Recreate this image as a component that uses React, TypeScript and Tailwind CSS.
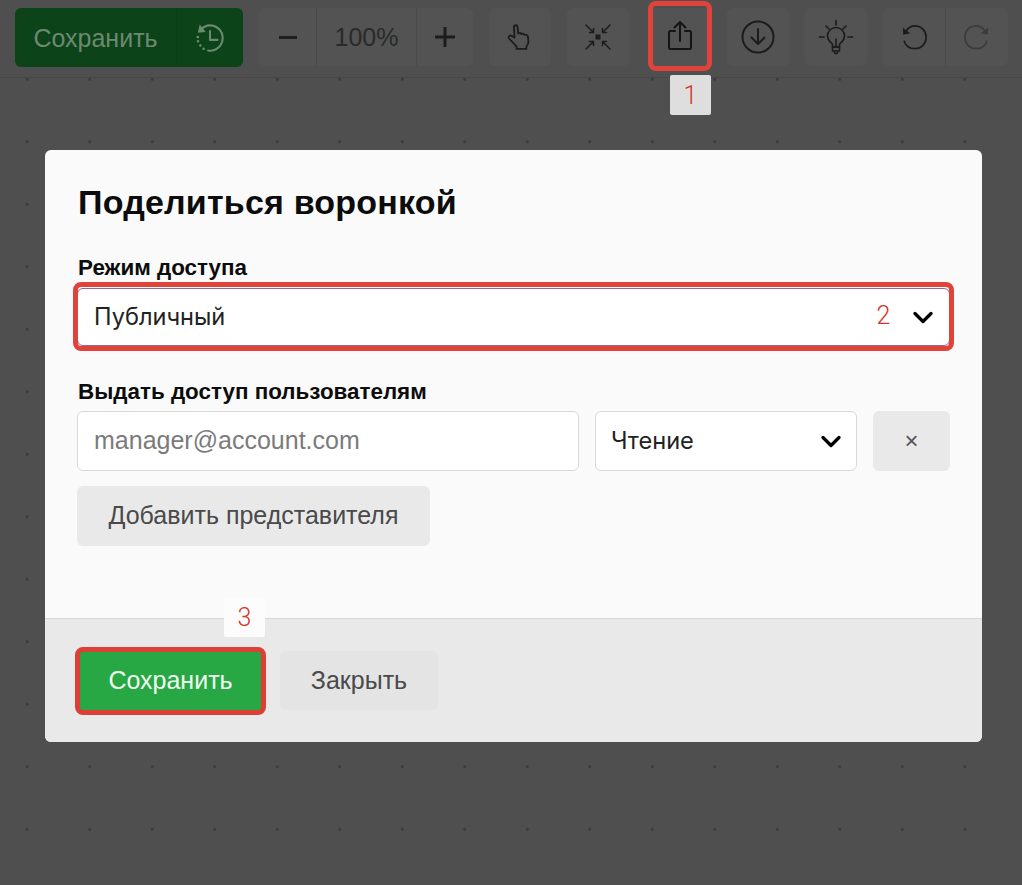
import { ReactNode } from 'react';

const Chevron = ({ className }: { className?: string }) => (
    <svg viewBox="0 0 20 13" className={className} fill="none" stroke="currentColor" strokeWidth="3.200" strokeLinecap="round" strokeLinejoin="round">
        <path d="M2 2.500 10 10.500l8-8" />
    </svg>
);

const HistoryIcon = () => (
    <svg viewBox="0 0 32 32" className="w-[30px] h-[30px]" fill="none" stroke="currentColor" strokeWidth="2.200" strokeLinecap="round" strokeLinejoin="round">
        <path d="M6.500 7C9 4 12.500 2.500 16 2.500c7.500 0 13.500 6 13.500 13.500S23.500 29.500 16 29.500c-.7 0-1.400-.1-2-.2" />
        <path d="M3 15v.01M3.200 19.500v.01M5.700 24v.01M9.200 27.500v.01" strokeWidth="2.800" />
        <path d="M5 1.500 3 10.500l8.500-.8z" fill="currentColor" stroke="none" />
        <path d="M16 8.500V18h8" />
    </svg>
);

const HandIcon = () => (
    <svg viewBox="0 0 26 26" className="w-[26px] h-[26px]" fill="none" stroke="currentColor" strokeWidth="1.800" strokeLinecap="round" strokeLinejoin="round">
        <path d="M7.500 13.500 7 3c0-2.200 3.400-2.400 3.600-.1l.6 6.600c1-1 2.800-.6 3.200.6 1-.8 2.700-.3 3 .8 1.600-.6 3.400.3 3.600 2l.4 4.500c.1 2-.8 3.600-2 5v2.500H9.500v-2.500L2 14.500c-1.300-1.700.9-3.800 2.700-2.600z" />
    </svg>
);

const TargetIcon = () => (
    <svg viewBox="0 0 30 30" className="w-[30px] h-[30px]" fill="none" stroke="currentColor" strokeWidth="1.500" strokeLinecap="round" strokeLinejoin="round">
        <rect x="12.500" y="12.500" width="5" height="5" fill="currentColor" stroke="none" />
        <path d="M3 3l7.500 7.500M10.500 6.500v4h-4M27 3l-7.500 7.500M19.500 6.500v4h4M3 27l7.500-7.500M10.500 23.500v-4h-4M27 27l-7.500-7.500M19.500 23.500v-4h4" />
    </svg>
);

const ShareIcon = () => (
    <svg viewBox="0 0 26 32" className="w-[26px] h-[32px] -mt-[3px]" fill="none" stroke="currentColor" strokeWidth="2" strokeLinecap="round" strokeLinejoin="round">
        <path d="M8 11H3.500A1.500 1.500 0 0 0 2 12.500v15A1.500 1.500 0 0 0 3.500 29h19a1.500 1.500 0 0 0 1.500-1.500v-15a1.500 1.500 0 0 0-1.500-1.500H18" />
        <path d="M13 21V2M7.500 7.500 13 2l5.500 5.500" />
    </svg>
);

const DownloadIcon = () => (
    <svg viewBox="0 0 34 34" className="w-[34px] h-[34px]" fill="none" stroke="currentColor" strokeWidth="2" strokeLinecap="round" strokeLinejoin="round">
        <circle cx="17" cy="17" r="15.500" />
        <path d="M17 9v15M10.500 17.500 17 24l6.500-6.500" />
    </svg>
);

const BulbIcon = () => (
    <svg viewBox="0 0 36 36" className="w-[36px] h-[36px]" fill="none" stroke="currentColor" strokeWidth="1.600" strokeLinecap="round" strokeLinejoin="round">
        <path d="M18 1.500v4.500M8 7l3 3M28 7l-3 3M1.500 18h4.500M30 18h4.500" />
        <path d="M14.500 28v-2.500c0-1.500-5-3-5-8.500a8.500 8.500 0 0 1 17 0c0 5.500-5 7-5 8.500V28z" />
        <path d="M14.500 28h7v4h-7zM16 32l1 2.500h2l1-2.500M18 27v-7" />
    </svg>
);

const UndoIcon = ({ flip }: { flip?: boolean }) => (
    <svg viewBox="0 0 30 30" className={flip ? 'w-[28px] h-[28px] -scale-x-100' : 'w-[28px] h-[28px]'} fill="none" stroke="currentColor" strokeWidth="1.800" strokeLinecap="round" strokeLinejoin="round">
        <path d="M6.500 8.500C8.800 4.900 12 3 16 3c6.900 0 12 5.400 12 12.300S22.900 27.500 16 27.500c-5.400 0-9.800-3-11.500-8" />
        <path d="M3 5l.5 7.500 7.500-1.500z" fill="currentColor" stroke="none" />
    </svg>
);

const ToolButton = ({ children, className }: { children: ReactNode; className?: string }) => (
    <div className={`h-[58px] flex items-center justify-center bg-[#535353] rounded-md ${className ?? ''}`}>{children}</div>
);

const Marker = ({ n, className }: { n: number; className: string }) => (
    <div className={`absolute w-[41px] h-[40px] pt-[2px] flex items-center justify-center rounded-[2px] text-[25px] font-light font-['Roboto'] text-[#d8342c] ${className}`}>{n}</div>
);

export default function App() {
    return (
        <div className="relative w-full h-[885px] overflow-hidden bg-[#4f4f4f] font-['Liberation_Sans',sans-serif] bg-[radial-gradient(circle,#3a3a3a_1.2px,transparent_1.6px)] bg-[size:62.500px_62.500px] bg-[position:-4px_48px]">
            {/* Toolbar */}
            <div className="h-[78px] flex gap-4 pl-[15px] pt-2 bg-[#4f4f4f] border-b border-[#474747] text-[#1c1c1c]">
                <div className="w-[228px] h-[59px] flex rounded-md bg-[#0c4319] text-[#6b8a70]">
                    <div className="flex-1 pt-[2px] flex items-center justify-center text-[25px] border-r border-[#0b3f18]">Сохранить</div>
                    <div className="w-[66px] flex items-center justify-center">
                        <HistoryIcon />
                    </div>
                </div>
                <div className="w-[214px] h-[58px] flex rounded-md bg-[#535353] text-[25px]">
                    <div className="w-[58px] flex items-center justify-center border-r border-[#4b4b4b]">
                        <div className="w-[18px] h-[3px] bg-[#1f1f1f]" />
                    </div>
                    <div className="w-[100px] pt-[2px] flex items-center justify-center text-[#2a2a2a] border-r border-[#4b4b4b]">100%</div>
                    <div className="flex-1 flex items-center justify-center">
                        <svg viewBox="0 0 20 20" className="w-[20px] h-[20px]" stroke="currentColor" strokeWidth="3">
                            <path d="M10 0v20M0 10h20" />
                        </svg>
                    </div>
                </div>
                <ToolButton className="w-[62px]"><HandIcon /></ToolButton>
                <ToolButton className="w-[62px]"><TargetIcon /></ToolButton>
                <div className="relative w-[63px] h-[58px] ml-[3px]">
                    <ToolButton className="w-[63px] text-[#141414]"><ShareIcon /></ToolButton>
                    <div className="absolute left-0 -right-px -top-[7px] -bottom-[5px] border-[5px] border-[#e0433a] rounded-lg" />
                </div>
                <ToolButton className="w-[62px]"><DownloadIcon /></ToolButton>
                <ToolButton className="w-[62px]"><BulbIcon /></ToolButton>
                <div className="w-[125px] h-[58px] flex rounded-md bg-[#535353]">
                    <div className="w-[63px] flex items-center justify-center border-r border-[#4b4b4b]">
                        <UndoIcon />
                    </div>
                    <div className="flex-1 flex items-center justify-center text-[#3c3c3c]">
                        <UndoIcon flip />
                    </div>
                </div>
            </div>
            <Marker n={1} className="left-[670px] top-[75px] bg-[#dedede]" />

            {/* Modal */}
            <div className="absolute left-[45px] top-[150px] w-[937px] h-[592px] flex flex-col rounded-md overflow-hidden bg-[#fafafa]">
                <div className="h-[469px] px-[32px] pt-[32px] border-b border-[#d6d6d6]">
                    <h2 className="ml-px text-[34px] leading-[40px] font-bold text-[#0c0c0c] tracking-[0.2px]">Поделиться воронкой</h2>
                    <div className="ml-px mt-[33px] text-[22.400px] leading-[26px] font-bold text-[#0c0c0c]">Режим доступа</div>
                    <div className="relative mt-[7px] h-[58px] flex items-center justify-between pl-[16px] pr-[16px] bg-white rounded-md font-['Inter'] text-[23.600px] text-[#222222] border border-[#8a6a9a]">
                        <span>Публичный</span>
                        <Chevron className="w-[20px] h-[13px] text-black" />
                        <div className="absolute -left-[5px] -right-[5px] -top-[7px] -bottom-[6px] border-[5px] border-[#e0433a] rounded-lg" />
                    </div>
                    <div className="ml-px mt-[33px] text-[22.400px] leading-[26px] font-bold text-[#0c0c0c]">Выдать доступ пользователям</div>
                    <div className="mt-[6px] flex gap-4">
                        <div className="w-[502px] h-[60px] flex items-center pl-[16px] bg-white border border-[#d9d9d9] rounded-md text-[25px] text-[#7b7b7b]">manager@account.com</div>
                        <div className="w-[262px] h-[60px] flex items-center justify-between pl-[15px] pr-[15px] bg-white border border-[#d9d9d9] rounded-md font-['Inter'] text-[23.600px] text-[#222222]">
                            <span>Чтение</span>
                            <Chevron className="w-[20px] h-[13px] text-black" />
                        </div>
                        <div className="w-[77px] h-[60px] flex items-center justify-center bg-[#e9e9e9] rounded-md text-[24px] text-[#555555]">×</div>
                    </div>
                    <div className="mt-[15px] w-[353px] h-[60px] flex items-center justify-center bg-[#e9e9e9] rounded-md text-[25px] text-[#4a4a4a]">Добавить представителя</div>
                </div>
                <div className="flex-1 flex items-center gap-[14px] pl-[30px] bg-[#e9e9e9]">
                    <div className="w-[191px] h-[68px] flex items-center justify-center bg-[#28a745] border-[5px] border-[#dc3f35] rounded-lg text-[25px] text-[#f0fff0]">Сохранить</div>
                    <div className="w-[158px] h-[59px] flex items-center justify-center bg-[#e4e4e4] rounded-md text-[25px] text-[#4a4a4a]">Закрыть</div>
                </div>
            </div>
            <Marker n={2} className="left-[863px] top-[295px] text-[#c6413c]" />
            <Marker n={3} className="left-[224px] top-[597px] bg-[#fcfcfc]" />
        </div>
    );
}
